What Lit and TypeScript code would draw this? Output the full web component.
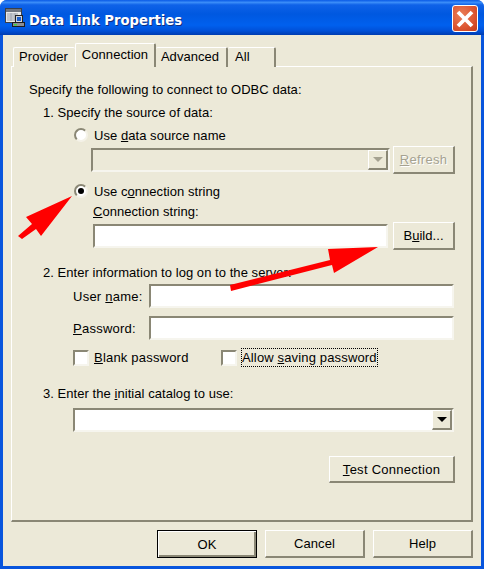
import { LitElement, html, css, svg } from "lit";
import { customElement } from "lit/decorators.js";

@customElement("app-root")
export class AppRoot extends LitElement {
  static styles = css`
    :host { display: block; width: 484px; height: 569px; font-family: "Liberation Sans", Arial, sans-serif; font-size: 13px; letter-spacing: 0.05px; color: #000; }
    * { box-sizing: border-box; }
    .window { position: relative; width: 484px; height: 569px; display: flex; flex-direction: column; background: #0855dd; border-radius: 7px 7px 0 0; overflow: hidden; }
    .titlebar { height: 35px; flex: none; display: flex; align-items: flex-start; padding: 5px 6px 0 5px; gap: 4px;
      background: linear-gradient(180deg, #0a5ae6 0%, #3a8cf8 7%, #0f62e8 14%, #0058e0 40%, #0060ee 72%, #0050d8 88%, #003cb0 100%); }
    .ticon { flex: none; margin-top: 3px; }
    .title { flex: 1; font-family: "DejaVu Sans", sans-serif; font-weight: bold; font-size: 13.2px; letter-spacing: 0; color: #fff; text-shadow: 1px 1px 0 #0f2f80; line-height: 16px; margin-top: 8px; }
    .close { width: 26px; height: 27px; border: 1px solid #fff; border-radius: 3px; background: radial-gradient(circle at 35% 35%, #ea7f58, #dc5430 60%, #c23c1a); display: flex; align-items: center; justify-content: center; }
    .client { flex: 1; margin: 0 3px 3px; background: #ece9d8; padding: 9px 8px 0; display: flex; flex-direction: column; }
    .tabs { display: flex; height: 23px; padding-left: 2px; position: relative; z-index: 1; margin-bottom: -1px; align-items: flex-end; }
    .tab { height: 20px; padding-top: 1px; text-align: center; background: #ece9d8; border: 1px solid #fff; border-bottom: none; border-right: 2px solid #8a8775; border-radius: 2px 2px 0 0; }
    .tab.on { height: 24px; padding-top: 3px; }
    .t1 { width: 62px; border-right: none; padding-right: 2px; } .t2 { width: 81px; } .t3 { width: 72px; border-left: none; padding-right: 2px; } .t4 { width: 48px; border-left: none; text-align: left; padding-left: 7px; }
    .panel { height: 456px; flex: none; border: 1px solid #fff; border-right: 2px solid #8a8775; border-bottom: 2px solid #8a8775; padding: 15px 0 0 17px; display: flex; flex-direction: column; }
    .text { height: 16px; line-height: 16px; white-space: nowrap; }
    .ind { margin-left: 14px; }
    .ind2 { margin-left: 64px; }
    .row { display: flex; align-items: center; white-space: nowrap; }
    .m2 { margin-top: 2px; } .m3 { margin-top: 3px; } .m5 { margin-top: 5px; } .m6 { margin-top: 6px; } .m7 { margin-top: 7px; }
    .m8 { margin-top: 8px; } .m9 { margin-top: 9px; } .m15 { margin-top: 15px; } .m19 { margin-top: 19px; } .m24 { margin-top: 24px; }
    .rad-row { height: 16px; margin-left: 45px; gap: 6px; }
    .radio { width: 14px; height: 14px; border-radius: 50%; background: #fff; border: 2px solid #8a8775; border-right-color: #f4f2e8; border-bottom-color: #f4f2e8; display: flex; align-items: center; justify-content: center; flex: none; }
    .dot { width: 6px; height: 6px; border-radius: 50%; background: #000; }
    .sunken { height: 24px; background: #fff; border: 2px solid #8a8775; border-right-color: #f6f5ee; border-bottom-color: #f6f5ee; display: flex; justify-content: flex-end; }
    .sunken.off { background: #ece9d8; }
    .combo1 { width: 299px; margin-left: 62px; }
    .connrow { margin-left: 64px; gap: 5px; height: 28px; }
    .combo1row { height: 28px; gap: 3px; }
    .conninput { width: 295px; }
    .btn { display: flex; align-items: center; justify-content: center; flex: none; height: 28px; background: #ece9d8; border: 1px solid #fff; border-right: 2px solid #8a8775; border-bottom: 2px solid #8a8775; }
    .small { width: 62px; }
    .dis { color: #a5a291; text-shadow: 1px 1px 0 #fff; letter-spacing: 0.3px; }
    .lab-row { height: 24px; margin-left: 44px; }
    .lab { width: 76px; letter-spacing: 0.25px; }
    .field { width: 305px; }
    .chk-row { height: 19px; margin-left: 44px; }
    .chk { width: 16px; height: 16px; background: #fff; border: 2px solid #8a8775; border-right-color: #f6f5ee; border-bottom-color: #f6f5ee; flex: none; }
    .chk-label { margin-left: 5px; width: 127px; letter-spacing: 0.2px; }
    .focus { margin-left: 4px; height: 19px; line-height: 17px; padding: 0; border: 1px dotted #000; letter-spacing: 0.15px; }
    .combo3 { width: 381px; margin-left: 44px; }
    .drop { width: 20px; height: 20px; background: #ece9d8; border: 1px solid #fff; border-right: 2px solid #8a8775; border-bottom: 2px solid #8a8775; display: flex; align-items: center; justify-content: center; }
    .tri { width: 0; height: 0; border: 5px solid transparent; border-top: 5px solid #000; border-bottom: none; }
    .drop.off .tri { border-top-color: #a5a291; }
    .test-row { justify-content: flex-end; width: 426px; }
    .test { width: 126px; height: 27px; letter-spacing: 0.27px; }
    .footer { display: flex; justify-content: flex-end; gap: 8px; margin-top: 8px; padding-right: 0; }
    .fbtn { width: 100px; height: 28px; }
    .def { border: 1px solid #000; box-shadow: inset 1px 1px 0 #fff, inset -2px -2px 0 #8a8775; }
    .arrows { position: absolute; inset: 0; pointer-events: none; z-index: 2; }
  `;

  private icon() {
    return svg`<svg class="ticon" width="20" height="20" viewBox="0 0 20 20">
      <rect x="0.5" y="0.5" width="16" height="14" fill="#e8e8e8" stroke="#3c4048"/>
      <rect x="1" y="1" width="15" height="3" fill="#70757f"/>
      <path d="M2 6h11M2 8h9M2 10h9M2 12h9M6 5v8M10 5v8" stroke="#9ea3ae"/>
      <rect x="10.5" y="7.5" width="7" height="7" fill="#d0d4dc" stroke="#222"/>
      <rect x="12" y="9" width="4" height="4" fill="#1f5fc8"/>
      <rect x="7.5" y="14.5" width="12" height="4" fill="#8a8e96" stroke="#1c1c20"/>
      <rect x="9" y="16" width="3" height="1.5" fill="#40d040"/>
    </svg>`;
  }

  render() {
    return html`
      <div class="window">
        <div class="titlebar">
          ${this.icon()}
          <div class="title">Data Link Properties</div>
          <div class="close">
            <svg width="20" height="20" viewBox="0 0 20 20"><path d="M3 3L17 17M17 3L3 17" stroke="#fff" stroke-width="3.8"/></svg>
          </div>
        </div>
        <div class="client">
          <div class="tabs">
            <div class="tab t1">Provider</div>
            <div class="tab on t2">Connection</div>
            <div class="tab t3">Advanced</div>
            <div class="tab t4">All</div>
          </div>
          <div class="panel">
            <div class="text">Specify the following to connect to ODBC data:</div>
            <div class="text ind m7">1. Specify the source of data:</div>
            <div class="row rad-row m6"><span class="radio"></span><span>Use <u>d</u>ata source name</span></div>
            <div class="row combo1row m3">
              <div class="sunken off combo1"><div class="drop off"><span class="tri"></span></div></div>
              <div class="btn small dis"><span><u>R</u>efresh</span></div>
            </div>
            <div class="row rad-row m9"><span class="radio"><span class="dot"></span></span><span>Use c<u>o</u>nnection string</span></div>
            <div class="text ind2 m5"><u>C</u>onnection string:</div>
            <div class="row connrow m2">
              <div class="sunken conninput"></div>
              <div class="btn small"><span>B<u>u</u>ild...</span></div>
            </div>
            <div class="text ind m15">2. Enter information to log on to the server:</div>
            <div class="row lab-row m3"><span class="lab">User <u>n</u>ame:</span><div class="sunken field"></div></div>
            <div class="row lab-row m8"><span class="lab"><u>P</u>assword:</span><div class="sunken field"></div></div>
            <div class="row chk-row m8">
              <span class="chk"></span><span class="chk-label"><u>B</u>lank password</span>
              <span class="chk"></span><span class="focus">Allow <u>s</u>aving password</span>
            </div>
            <div class="text ind m19">3. Enter the <u>i</u>nitial catalog to use:</div>
            <div class="sunken combo3 m6"><div class="drop"><span class="tri"></span></div></div>
            <div class="row test-row m24"><div class="btn test"><span><u>T</u>est Connection</span></div></div>
          </div>
          <div class="footer">
            <div class="btn fbtn def">OK</div>
            <div class="btn fbtn">Cancel</div>
            <div class="btn fbtn">Help</div>
          </div>
        </div>
        <svg class="arrows" width="484" height="569" viewBox="0 0 484 569">
          <polygon fill="#ff0000" points="72,196 26,217 32,224 18,236 22,239 36,229 41,236"/>
          <polygon fill="#ff0000" points="378,247 328,249 330,260 230,285 231,291 332,265 334,273"/>
        </svg>
      </div>
    `;
  }
}
